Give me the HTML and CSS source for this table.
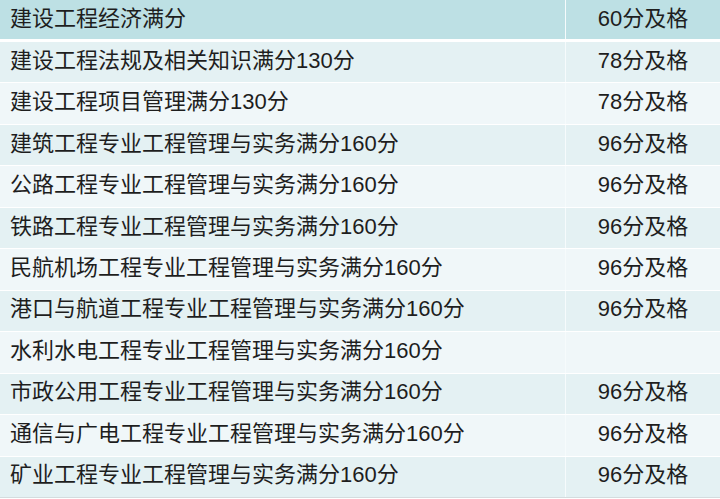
FILE: index.html
```html
<!DOCTYPE html>
<html lang="zh">
<head>
<meta charset="utf-8">
<link rel="stylesheet" href="styles.css">
</head>
<body>
<div class="table">
  <div class="row head"><div class="c1">建设工程经济满分</div><div class="c2">60分及格</div></div>
  <div class="row odd"><div class="c1">建设工程法规及相关知识满分130分</div><div class="c2">78分及格</div></div>
  <div class="row even"><div class="c1">建设工程项目管理满分130分</div><div class="c2">78分及格</div></div>
  <div class="row odd"><div class="c1">建筑工程专业工程管理与实务满分160分</div><div class="c2">96分及格</div></div>
  <div class="row even"><div class="c1">公路工程专业工程管理与实务满分160分</div><div class="c2">96分及格</div></div>
  <div class="row odd"><div class="c1">铁路工程专业工程管理与实务满分160分</div><div class="c2">96分及格</div></div>
  <div class="row even"><div class="c1">民航机场工程专业工程管理与实务满分160分</div><div class="c2">96分及格</div></div>
  <div class="row odd"><div class="c1">港口与航道工程专业工程管理与实务满分160分</div><div class="c2">96分及格</div></div>
  <div class="row even"><div class="c1">水利水电工程专业工程管理与实务满分160分</div><div class="c2"></div></div>
  <div class="row odd"><div class="c1">市政公用工程专业工程管理与实务满分160分</div><div class="c2">96分及格</div></div>
  <div class="row even"><div class="c1">通信与广电工程专业工程管理与实务满分160分</div><div class="c2">96分及格</div></div>
  <div class="row odd last"><div class="c1">矿业工程专业工程管理与实务满分160分</div><div class="c2">96分及格</div></div>
</div>
</body>
</html>
```
FILE: styles.css
```css
html, body {
  margin: 0;
  padding: 0;
  background: #ffffff;
}
.table {
  width: 720px;
  height: 498px;
  display: flex;
  flex-direction: column;
  font-family: "Liberation Sans", "Noto Sans CJK SC", sans-serif;
  font-size: 22px;
  line-height: 24px;
  color: #1e1e1e;
}
.row {
  flex: 1;
  display: flex;
  border-bottom: 1px solid #ffffff;
}
.row.head {
  flex: 0 0 39px;
  border-bottom: 3px solid #ffffff;
  background: #bde0e4;
}
.row.odd { background: #e4f1f3; }
.row.even { background: #f0f7f9; }
.row.last { border-bottom: 1px solid #d4dcde; }
.c1 {
  width: 555px;
  padding-left: 10px;
  padding-bottom: 3px;
  display: flex;
  align-items: center;
  border-right: 1px solid #f6fbfc;
}
.c2 {
  flex: 1;
  display: flex;
  align-items: center;
  justify-content: center;
  padding-bottom: 3px;
}
.head .c1, .head .c2 { padding-bottom: 1px; }
```
